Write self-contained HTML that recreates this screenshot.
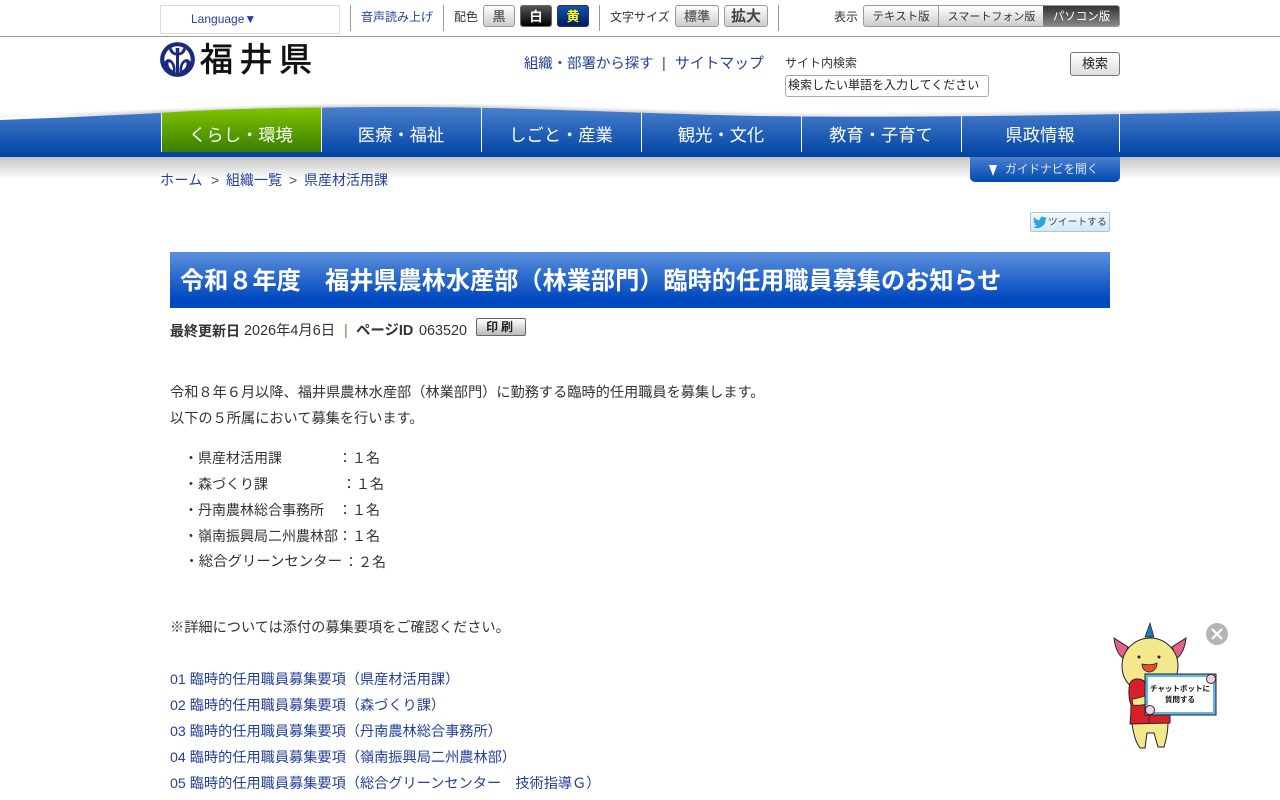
<!DOCTYPE html>
<html lang="ja"><head><meta charset="utf-8"><title>福井県</title>
<style>
*{box-sizing:border-box}
html,body{margin:0;padding:0;width:1280px;height:800px;overflow:hidden;background:#fff}
body{font-family:"Liberation Sans","Noto Sans CJK JP",sans-serif;color:#333;position:relative}
.a{position:absolute;white-space:nowrap}
.l{color:#24409a}
.sep{position:absolute;width:1px;background:#999;top:5px;height:26px}
.btn{position:absolute;top:5px;height:22px;border:1px solid #999;border-radius:3px;background:linear-gradient(#fff,#ccc);font-size:13px;text-align:center;line-height:21px;color:#666;font-weight:bold}
.nav{position:absolute;top:124px;font-size:17.3px;color:#fff;width:160px;text-align:center;line-height:22px;white-space:nowrap}
.t{position:absolute;left:170px;font-size:14.2px;line-height:20px;white-space:pre;color:#333}
.r{font-size:14px}
.c{position:absolute;top:0}
</style></head><body>

<!-- top bar -->
<div class="a" style="left:160px;top:5px;width:180px;height:29px;border:1px solid #ddd"></div>
<div class="a l" style="left:191px;top:11px;font-size:12px;line-height:16px">Language▼</div>
<div class="sep" style="left:350px"></div>
<div class="a l" style="left:361px;top:9px;font-size:12px;line-height:16px">音声読み上げ</div>
<div class="sep" style="left:443px"></div>
<div class="a" style="left:454px;top:9px;font-size:12px;line-height:16px">配色</div>
<div class="btn" style="left:483px;width:32px">黒</div>
<div class="btn" style="left:520px;width:32px;background:linear-gradient(#555,#000);color:#fff;border-color:#666">白</div>
<div class="btn" style="left:557px;width:32px;background:linear-gradient(#1550b0,#001a60);color:#ff0;border-color:#335">黄</div>
<div class="sep" style="left:599px"></div>
<div class="a" style="left:610px;top:9px;font-size:12px;line-height:16px">文字サイズ</div>
<div class="btn" style="left:675px;width:44px">標準</div>
<div class="btn" style="left:724px;width:44px;font-size:15px;color:#444">拡大</div>
<div class="sep" style="left:778px"></div>
<div class="a" style="left:834px;top:9px;font-size:12px;line-height:16px">表示</div>
<div class="a" style="left:863px;top:5px;width:257px;height:22px;border:1px solid #999;border-radius:3px;background:linear-gradient(#fff,#ccc);overflow:hidden;font-size:11.5px;line-height:22px;color:#333">
  <span class="a" style="left:0;top:0;width:75px;height:20px;text-align:center;border-right:1px solid #999">テキスト版</span>
  <span class="a" style="left:75px;top:0;width:105px;height:20px;text-align:center;font-size:11px">スマートフォン版</span>
  <span class="a" style="left:179px;top:0;width:77px;height:20px;text-align:center;background:linear-gradient(#333,#888);color:#fff">パソコン版</span>
</div>
<div class="a" style="left:0;top:36px;width:1280px;height:1px;background:#999"></div>

<!-- logo -->
<svg class="a" style="left:160px;top:42px" width="35" height="35" viewBox="0 0 35 35">
<circle cx="17.5" cy="17.5" r="17.4" fill="#1a2a7c"/>
<circle cx="17.5" cy="17.5" r="13.2" fill="#fff"/>
<path d="M9 7.500 C11 12.500 14 13.500 17.5 13.500 C21 13.500 24 12.500 26 7.500 L23.500 5.500 C22.500 8.500 21 10.500 19.300 10.800 V6 H15.700 V10.800 C14 10.500 12.500 8.500 11.500 5.500Z" fill="#1a2a7c"/>
<path d="M16 13 H19 V33 H16Z" fill="#1a2a7c"/>
<path d="M4.500 20 C7 14.500 14 17 15.500 26 L15.500 32 C9 31 4.500 26 4.500 20Z" fill="#1a2a7c"/>
<path d="M30.500 20 C28 14.500 21 17 19.500 26 L19.500 32 C26 31 30.500 26 30.500 20Z" fill="#1a2a7c"/>
<path d="M8.500 20.500 C11 19.500 13 24 13 28.500 C10 27 8 24 8.500 20.500Z" fill="#fff"/>
<path d="M26.500 20.500 C24 19.500 22 24 22 28.500 C25 27 27 24 26.500 20.500Z" fill="#fff"/>
</svg>
<div class="a" style="left:200px;top:40px;font-size:33px;line-height:40px;color:#111;letter-spacing:6.500px;-webkit-text-stroke:.7px #111">福井県</div>

<div class="a l" style="left:524px;top:55px;font-size:14.4px;line-height:18px">組織・部署から探す</div>
<div class="a l" style="left:662px;top:55px;font-size:14.4px;line-height:18px">|</div>
<div class="a l" style="left:675px;top:55px;font-size:14.8px;line-height:18px">サイトマップ</div>
<div class="a" style="left:785px;top:55px;font-size:12px;line-height:16px;color:#333">サイト内検索</div>
<div class="a" style="left:785px;top:75px;width:204px;height:22px;border:1px solid #aaa;border-radius:3px;font-size:12px;line-height:19px;padding-left:2px;color:#222;background:#fff">検索したい単語を入力してください</div>
<div class="a" style="left:1070px;top:52px;width:50px;height:24px;border:1px solid #777;border-radius:3px;background:linear-gradient(#fff,#ddd);font-size:13px;line-height:22px;text-align:center;color:#222">検索</div>

<!-- nav band -->
<svg class="a" style="left:0;top:98px" width="1280" height="90" viewBox="0 0 1280 90">
<defs>
<linearGradient id="b" x1="0" y1="0" x2="0" y2="1"><stop offset="0" stop-color="#4a80cc"/><stop offset="1" stop-color="#0043a4"/></linearGradient>
<linearGradient id="g" x1="0" y1="0" x2="0" y2="1"><stop offset="0" stop-color="#80c400"/><stop offset="1" stop-color="#3a7e00"/></linearGradient>
<linearGradient id="s" x1="0" y1="0" x2="0" y2="1"><stop offset="0" stop-color="#c4c4c4"/><stop offset="1" stop-color="#fff"/></linearGradient>
<filter id="bl"><feGaussianBlur stdDeviation="1.500"/></filter>
</defs>
<rect x="0" y="59" width="1280" height="22" fill="url(#s)"/>
<path d="M0 21 C120 18 240 9 400 9 C520 9 620 15 760 18 C900 20 1100 17 1280 13 V20 H0Z" transform="translate(0,-2)" fill="#ccc" filter="url(#bl)"/>
<path d="M0 22 C120 18 240 9 400 9 C520 9 620 15 760 18 C900 20 1100 17 1280 13 V59 H0Z" fill="url(#b)"/>
<path d="M161 15 C200 12 260 10 321 9.500 V54 H161Z" fill="url(#g)"/>
<g fill="#fff"><rect x="161" y="15" width="1" height="39"/><rect x="321" y="9" width="1" height="45"/><rect x="481" y="10" width="1" height="44"/><rect x="641" y="14" width="1" height="40"/><rect x="801" y="18" width="1" height="36"/><rect x="961" y="18" width="1" height="36"/><rect x="1119" y="15" width="1" height="39"/></g>
</svg>
<div class="nav" style="left:161px">くらし・環境</div>
<div class="nav" style="left:321px">医療・福祉</div>
<div class="nav" style="left:481px">しごと・産業</div>
<div class="nav" style="left:641px">観光・文化</div>
<div class="nav" style="left:801px">教育・子育て</div>
<div class="nav" style="left:960px">県政情報</div>

<div class="a" style="left:970px;top:157px;width:150px;height:25px;background:linear-gradient(#4a80cc,#0048b0);border-radius:0 0 5px 5px;color:#dde6f5;font-size:11.7px;line-height:25px"><span class="a" style="left:19px;top:8px;width:0;height:0;border-left:4px solid transparent;border-right:4px solid transparent;border-top:11px solid #fff"></span><span class="a" style="left:35px;top:0">ガイドナビを開く</span></div>

<div class="a l" style="left:160px;top:171px;font-size:14px;letter-spacing:.4px;line-height:18px">ホーム</div>
<div class="a" style="left:211px;top:171px;font-size:14px;line-height:18px;color:#555">&gt;</div>
<div class="a l" style="left:226px;top:171px;font-size:14px;line-height:18px">組織一覧</div>
<div class="a" style="left:289px;top:171px;font-size:14px;line-height:18px;color:#555">&gt;</div>
<div class="a l" style="left:304px;top:171px;font-size:14px;line-height:18px">県産材活用課</div>

<!-- tweet -->
<div class="a" style="left:1030px;top:212px;width:80px;height:20px;border:1px solid #a8c8dc;border-radius:2px;background:linear-gradient(#f4fafd,#d4e8f4);font-size:9.8px;line-height:20px;color:#345;padding-left:17px">ツイートする
<svg class="a" style="left:2px;top:3px" width="14" height="13" viewBox="0 0 24 20"><path d="M24 2.400a9.800 9.800 0 0 1-2.800.8 5 5 0 0 0 2.200-2.700 9.800 9.800 0 0 1-3.100 1.200 4.900 4.900 0 0 0-8.400 4.500A14 14 0 0 1 1.700 1a4.900 4.900 0 0 0 1.500 6.600 4.900 4.900 0 0 1-2.200-.6 4.900 4.900 0 0 0 3.900 4.900 4.900 4.900 0 0 1-2.200.1 4.900 4.900 0 0 0 4.600 3.400A9.900 9.900 0 0 1 0 17.400 14 14 0 0 0 21.500 5a10 10 0 0 0 2.500-2.600Z" fill="#2fa5e0"/></svg></div>

<!-- title -->
<div class="a" style="left:170px;top:252px;width:940px;height:56px;background:linear-gradient(#5c90da,#0048c0 85%);color:#fff;font-size:24.18px;font-weight:bold;line-height:60px;padding-left:10px;overflow:hidden">令和８年度　福井県農林水産部（林業部門）臨時的任用職員募集のお知らせ</div>

<div class="a" style="left:170px;top:322px;font-size:14px;line-height:18px;color:#333"><b>最終更新日</b></div>
<div class="a" style="left:244px;top:322px;font-size:14.4px;line-height:18px;color:#333">2026年4月6日</div>
<div class="a" style="left:344px;top:322px;font-size:14.4px;line-height:18px;color:#a07030">|</div>
<div class="a" style="left:356px;top:322px;font-size:14.4px;line-height:18px;color:#333"><b>ページID</b></div>
<div class="a" style="left:419px;top:322px;font-size:14.4px;line-height:18px;color:#333">063520</div>
<div class="a" style="left:476px;top:318px;width:50px;height:18px;border:1px solid #666;border-radius:2px;background:linear-gradient(#fff,#bbb);font-size:12px;font-weight:bold;line-height:16px;text-align:center;color:#222;letter-spacing:3px">印刷</div>

<!-- body -->
<div class="t" style="top:383px">令和８年６月以降、福井県農林水産部（林業部門）に勤務する臨時的任用職員を募集します。</div>
<div class="t" style="top:409px">以下の５所属において募集を行います。</div>
<div class="t r" style="top:448px">　・県産材活用課<span class="c" style="left:168px">：１名</span></div>
<div class="t r" style="top:474px">　・森づくり課<span class="c" style="left:172px">：１名</span></div>
<div class="t r" style="top:500px">　・丹南農林総合事務所<span class="c" style="left:168px">：１名</span></div>
<div class="t r" style="top:526px">　・嶺南振興局二州農林部<span class="c" style="left:168px">：１名</span></div>
<div class="t" style="top:552px;font-size:14.4px">　・総合グリーンセンター<span class="c" style="left:174px;font-size:14px">：２名</span></div>
<div class="t" style="top:618px">※詳細については添付の募集要項をご確認ください。</div>
<div class="t l" style="top:670px;color:#24409a">01 臨時的任用職員募集要項（県産材活用課）</div>
<div class="t l" style="top:696px;color:#24409a">02 臨時的任用職員募集要項（森づくり課）</div>
<div class="t l" style="top:722px;color:#24409a">03 臨時的任用職員募集要項（丹南農林総合事務所）</div>
<div class="t l" style="top:748px;color:#24409a">04 臨時的任用職員募集要項（嶺南振興局二州農林部）</div>
<div class="t l" style="top:774px;color:#24409a">05 臨時的任用職員募集要項（総合グリーンセンター　技術指導Ｇ）</div>

<!-- mascot -->
<svg class="a" style="left:1100px;top:615px" width="140" height="140" viewBox="0 0 140 140">
<circle cx="117" cy="19" r="11" fill="#b5b5b5"/>
<path d="M112 14 L122 24 M122 14 L112 24" stroke="#fff" stroke-width="2.200"/>
<path d="M45 22 L50 8 L54 22Z" fill="#1f78b8" stroke="#123" stroke-width=".7"/>
<path d="M14 23 L28 32 L24 44 C18 40 15 32 14 23Z" fill="#e0608a" stroke="#222" stroke-width="1"/>
<path d="M86 23 L72 32 L76 44 C82 40 85 32 86 23Z" fill="#e0608a" stroke="#222" stroke-width="1"/>
<path d="M32 108 C33 118 36 128 40 133 L45 133 L47 118 L54 118 L58 132 L64 132 C67 122 68 114 68 108Z" fill="#f3e88c" stroke="#222" stroke-width="1"/>
<circle cx="50" cy="51" r="28" fill="#f3e88c" stroke="#222" stroke-width="1"/>
<circle cx="39" cy="42" r="1.500" fill="#222"/><circle cx="59" cy="42" r="1.500" fill="#222"/>
<path d="M42 49 C47 50 53 50 57 48 C57 54 53 57 49 57 C46 57 42 54 42 49Z" fill="#e8502a" stroke="#222" stroke-width=".8"/>
<path d="M30 68 C33 63 40 63 44 66 L48 74 L70 90 L70 108 L30 109 C31 100 31 95 31 90 C29 85 28 75 30 68Z" fill="#d8202c" stroke="#222" stroke-width="1"/>
<path d="M32 84 C38 84 44 80 52 80 L52 88 C44 90 38 91 33 90Z" fill="#f3e88c" stroke="#222" stroke-width=".8"/>
<path d="M49 90 V109" stroke="#222" stroke-width=".8"/>
<rect x="45" y="59" width="71" height="41" fill="#5cb8e8" stroke="#222" stroke-width="1"/>
<rect x="48" y="62" width="65" height="35" fill="#fff"/>
<circle cx="111" cy="64" r="4.500" fill="#f4d0e0" stroke="#333" stroke-width="1"/><circle cx="50" cy="95" r="4.500" fill="#f4d0e0" stroke="#333" stroke-width="1"/>
<text x="80" y="76" font-size="7.500" font-weight="bold" text-anchor="middle" fill="#111" font-family="Liberation Sans,Noto Sans CJK JP,sans-serif">チャットボットに</text>
<text x="80" y="87" font-size="7.500" font-weight="bold" text-anchor="middle" fill="#111" font-family="Liberation Sans,Noto Sans CJK JP,sans-serif">質問する</text>
</svg>
</body></html>
